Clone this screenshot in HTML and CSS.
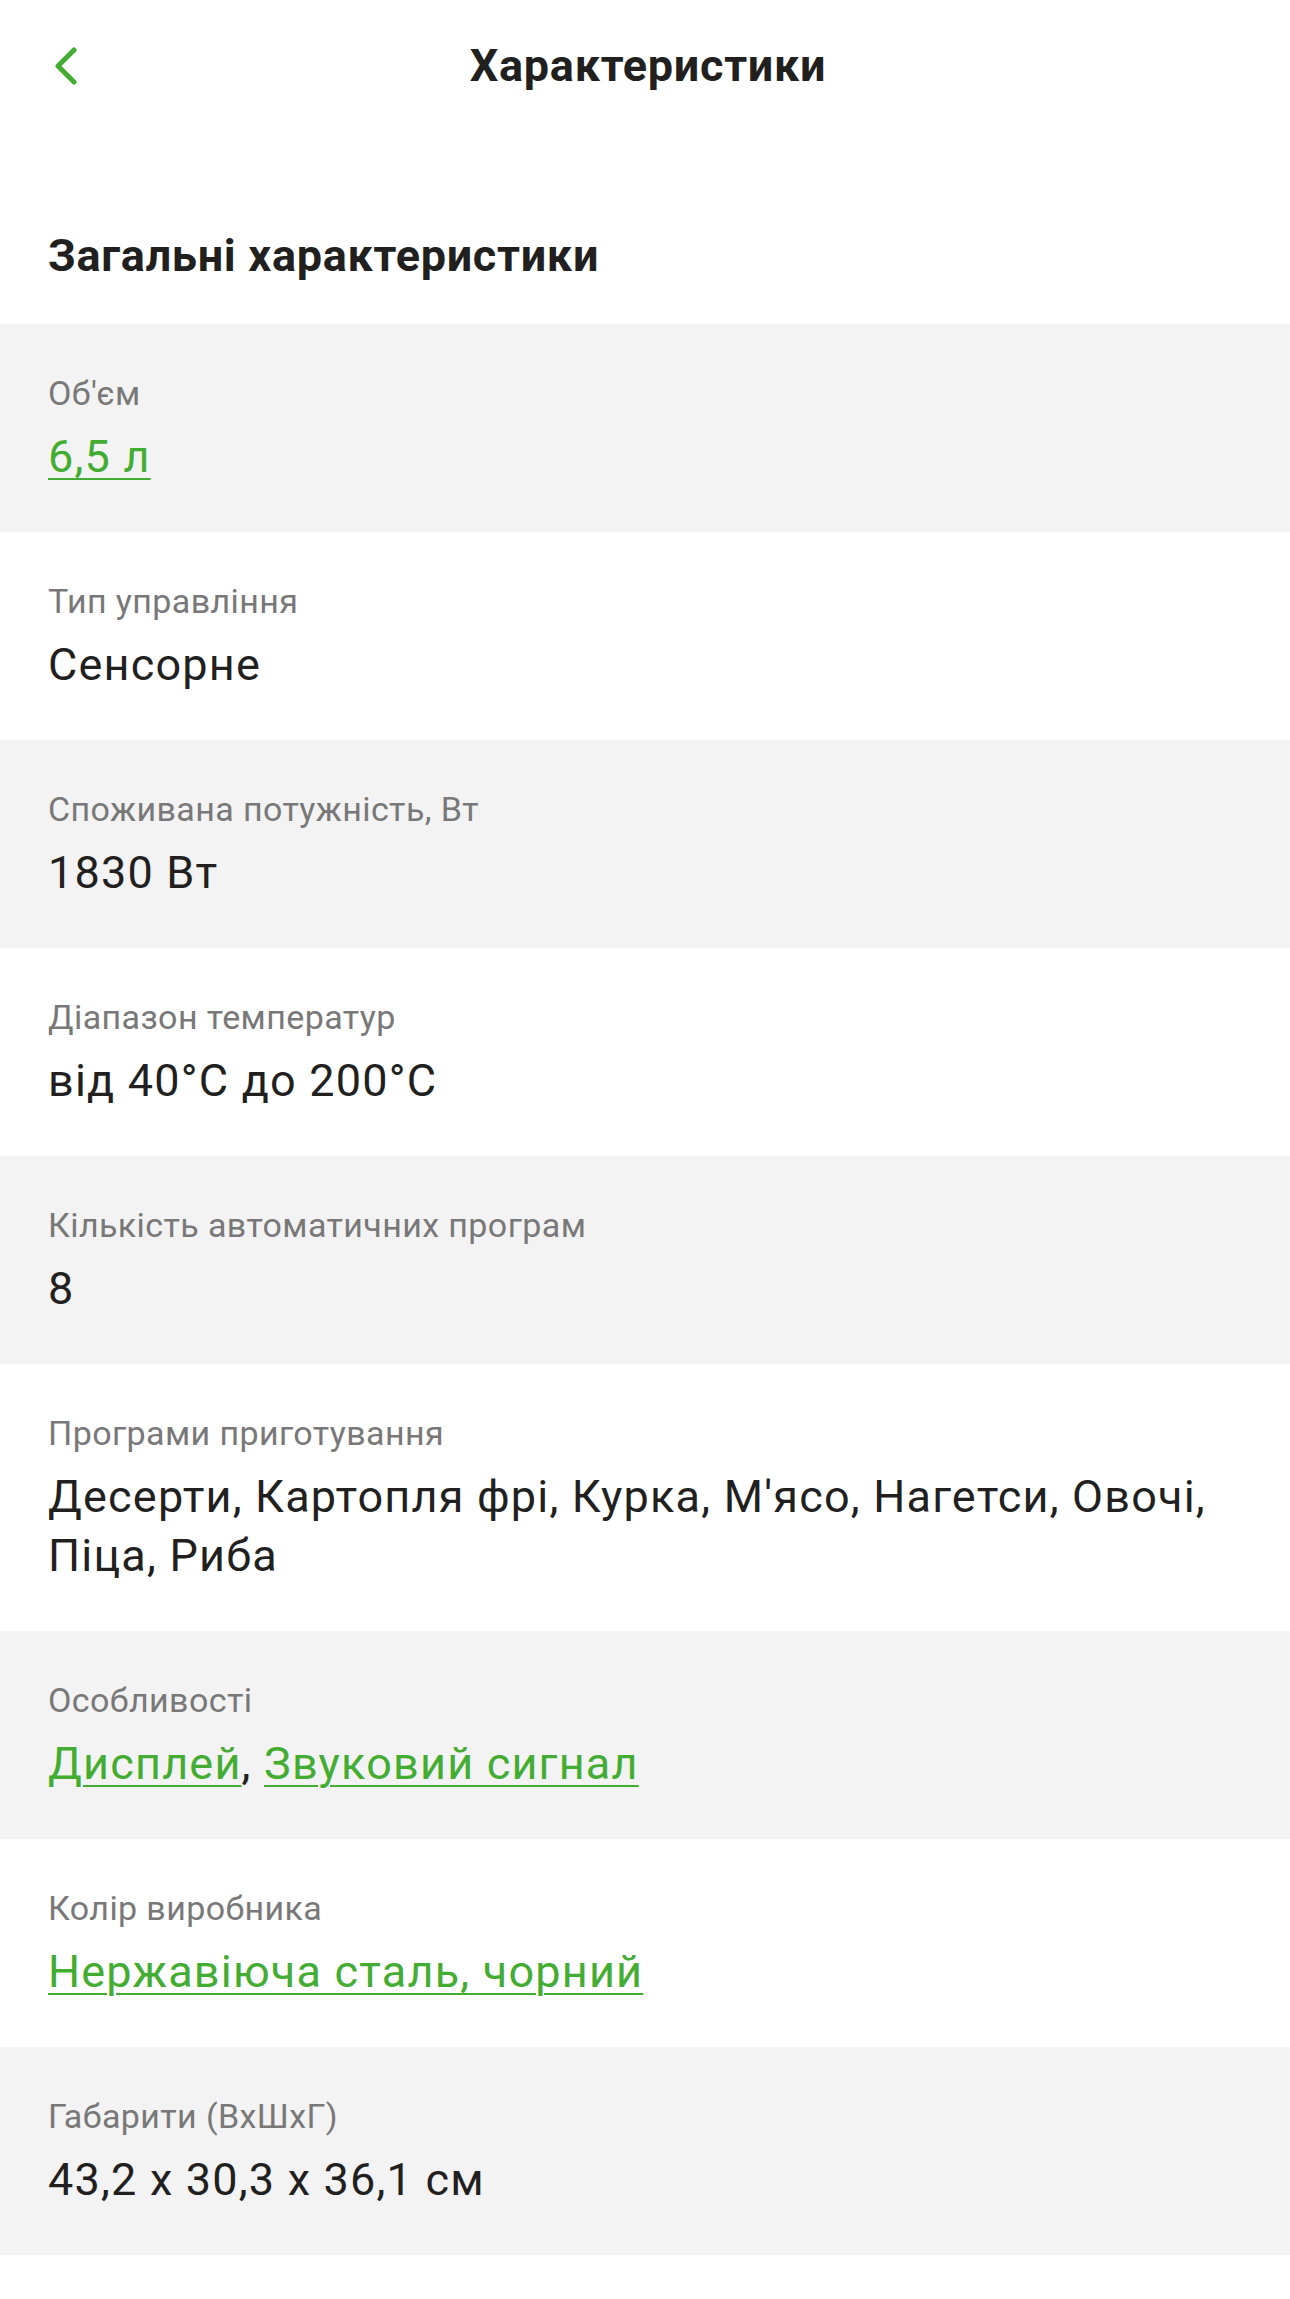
FILE: index.html
```html
<!DOCTYPE html>
<html lang="uk">
<head>
  <meta charset="UTF-8">
  <meta name="viewport" content="width=device-width, initial-scale=1.0">
  <title>Характеристики</title>
  <link rel="stylesheet" href="styles.css">
</head>
<body>
  <header class="top-bar">
    <button type="button" class="back-btn" aria-label="Назад">
      <svg width="24" height="38" viewBox="0 0 24 38">
        <polyline points="20,3 4,19 20,35" fill="none" stroke="#43ac32" stroke-width="5" stroke-linecap="round" stroke-linejoin="round"/>
      </svg>
    </button>
    <h1>Характеристики</h1>
    <span></span>
  </header>

  <h2 class="section-title">Загальні характеристики</h2>

  <ul class="specs">
    <li class="spec">
      <div class="spec-label">Об'єм</div>
      <div class="spec-value"><a href="#">6,5 л</a></div>
    </li>
    <li class="spec">
      <div class="spec-label">Тип управління</div>
      <div class="spec-value">Сенсорне</div>
    </li>
    <li class="spec">
      <div class="spec-label">Споживана потужність, Вт</div>
      <div class="spec-value">1830 Вт</div>
    </li>
    <li class="spec">
      <div class="spec-label">Діапазон температур</div>
      <div class="spec-value">від 40°C до 200°C</div>
    </li>
    <li class="spec">
      <div class="spec-label">Кількість автоматичних програм</div>
      <div class="spec-value">8</div>
    </li>
    <li class="spec">
      <div class="spec-label">Програми приготування</div>
      <div class="spec-value">Десерти, Картопля фрі, Курка, М'ясо, Нагетси, Овочі, Піца, Риба</div>
    </li>
    <li class="spec">
      <div class="spec-label">Особливості</div>
      <div class="spec-value"><a href="#">Дисплей</a>, <a href="#">Звуковий сигнал</a></div>
    </li>
    <li class="spec">
      <div class="spec-label">Колір виробника</div>
      <div class="spec-value"><a href="#">Нержавіюча сталь, чорний</a></div>
    </li>
    <li class="spec">
      <div class="spec-label">Габарити (ВхШхГ)</div>
      <div class="spec-value">43,2 x 30,3 x 36,1 см</div>
    </li>
  </ul>
</body>
</html>
```

FILE: styles.css
```css
body {
  margin: 0;
  background: #fff;
  font-family: Roboto, 'Noto Sans', Arial, sans-serif;
  color: #221f1f;
}
.top-bar {
  display: grid;
  grid-template-columns: 1fr auto 1fr;
  align-items: center;
  height: 132px;
  padding: 0 48px 0 54px;
}
.back-btn {
  justify-self: start;
  display: flex;
  align-items: center;
  padding: 0;
  border: none;
  background: none;
  cursor: pointer;
}
.top-bar h1 {
  margin: 0;
  font-size: 45px;
  font-weight: 700;
  letter-spacing: 0.7px;
  color: #221f1f;
  line-height: 52px;
}
.section-title {
  margin: 98px 0 42px;
  padding: 0 48px;
  font-size: 45px;
  font-weight: 700;
  letter-spacing: 0.7px;
  line-height: 52px;
}
.specs {
  list-style: none;
  margin: 0;
  padding: 0;
}
.spec {
  padding: 49px 48px 46px;
}
.spec:nth-child(odd) {
  background: #f3f3f3;
}
.spec-label {
  font-size: 34px;
  letter-spacing: 0.4px;
  line-height: 40px;
  color: #797878;
}
.spec-value {
  margin-top: 14px;
  font-size: 45px;
  letter-spacing: 1.2px;
  line-height: 59px;
  color: #221f1f;
}
.spec-value a {
  color: #43ac32;
  text-decoration: underline;
  text-decoration-thickness: 2px;
  text-underline-offset: 6px;
}
```
